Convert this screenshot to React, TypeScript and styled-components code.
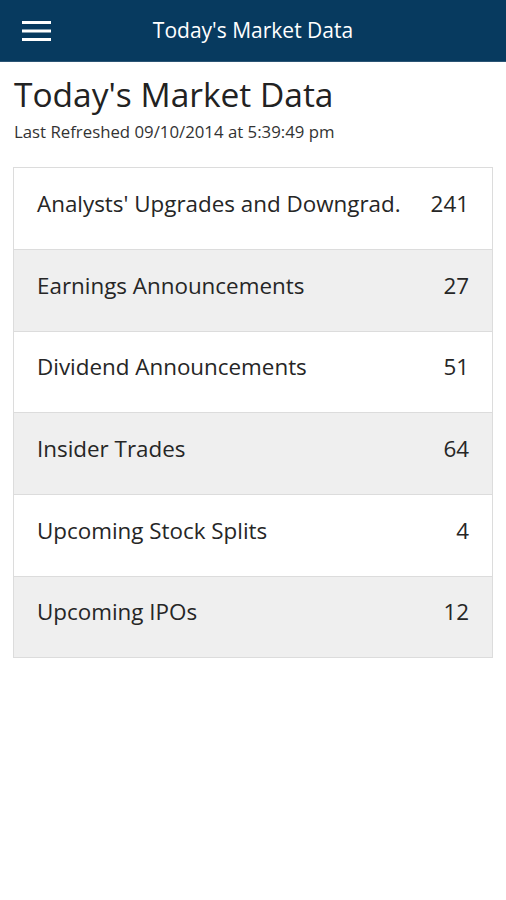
import React from 'react';
import styled, { createGlobalStyle } from 'styled-components';

const GlobalStyle = createGlobalStyle`
  body {
    margin: 0;
    background: #ffffff;
    font-family: 'Open Sans', 'Noto Sans', sans-serif;
    -webkit-font-smoothing: antialiased;
  }
`;

const items = [
  { label: "Analysts' Upgrades and Downgrad.", count: 241 },
  { label: 'Earnings Announcements', count: 27 },
  { label: 'Dividend Announcements', count: 51 },
  { label: 'Insider Trades', count: 64 },
  { label: 'Upcoming Stock Splits', count: 4 },
  { label: 'Upcoming IPOs', count: 12 },
];

const Page = styled.div`
  min-height: 900px;
  background: #fff;
`;

const TopBar = styled.header`
  box-sizing: border-box;
  height: 62px;
  background: #073a5f;
  border-bottom: 1px solid #2b5474;
  display: grid;
  grid-template-columns: 62px 1fr 62px;
  align-items: center;
  color: #fff;
`;

const MenuButton = styled.button`
  border: 0;
  background: none;
  padding: 0 0 0 22px;
  height: 61px;
  display: flex;
  align-items: center;
  cursor: pointer;
`;

const BarTitle = styled.h1`
  margin: 0;
  text-align: center;
  font-size: 21px;
  font-weight: 400;
  padding-bottom: 2px;
`;

const Content = styled.main`
  padding: 9px 13px 0 14px;
`;

const Heading = styled.h2`
  margin: 0;
  font-size: 33.5px;
  font-weight: 400;
  color: #222;
  line-height: 46px;
`;

const Refreshed = styled.p`
  margin: 3px 0 0 0;
  font-size: 16.8px;
  font-weight: 400;
  color: #333;
  line-height: 24px;
`;

const List = styled.ul`
  list-style: none;
  margin: 23px 0 0 -1px;
  padding: 0;
  border: 1px solid #dcdcdc;
`;

const Row = styled.li<{ $shaded: boolean }>`
  box-sizing: border-box;
  height: 81.67px;
  display: flex;
  align-items: center;
  justify-content: space-between;
  padding: 0 23px 10px 23px;
  background: ${(p) => (p.$shaded ? '#efefef' : '#ffffff')};
  border-top: 1px solid #dcdcdc;
  font-size: 22.4px;
  font-weight: 400;
  color: #262626;
  &:first-child {
    border-top: 0;
    height: 81px;
  }
`;

const Count = styled.span`
  text-align: right;
`;

const Hamburger = () => (
  <svg width="30" height="22" viewBox="0 0 30 22">
    <rect x="0" y="1" width="29" height="3" fill="#fff" />
    <rect x="0" y="9.5" width="29" height="3" fill="#fff" />
    <rect x="0" y="18" width="29" height="3" fill="#fff" />
  </svg>
);

export default function App() {
  return (
    <Page>
      <GlobalStyle />
      <TopBar>
        <MenuButton aria-label="menu">
          <Hamburger />
        </MenuButton>
        <BarTitle>Today's Market Data</BarTitle>
        <span />
      </TopBar>
      <Content>
        <Heading>Today's Market Data</Heading>
        <Refreshed>Last Refreshed 09/10/2014 at 5:39:49 pm</Refreshed>
        <List>
          {items.map((it, i) => (
            <Row key={it.label} $shaded={i % 2 === 1}>
              <span>{it.label}</span>
              <Count>{it.count}</Count>
            </Row>
          ))}
        </List>
      </Content>
    </Page>
  );
}
